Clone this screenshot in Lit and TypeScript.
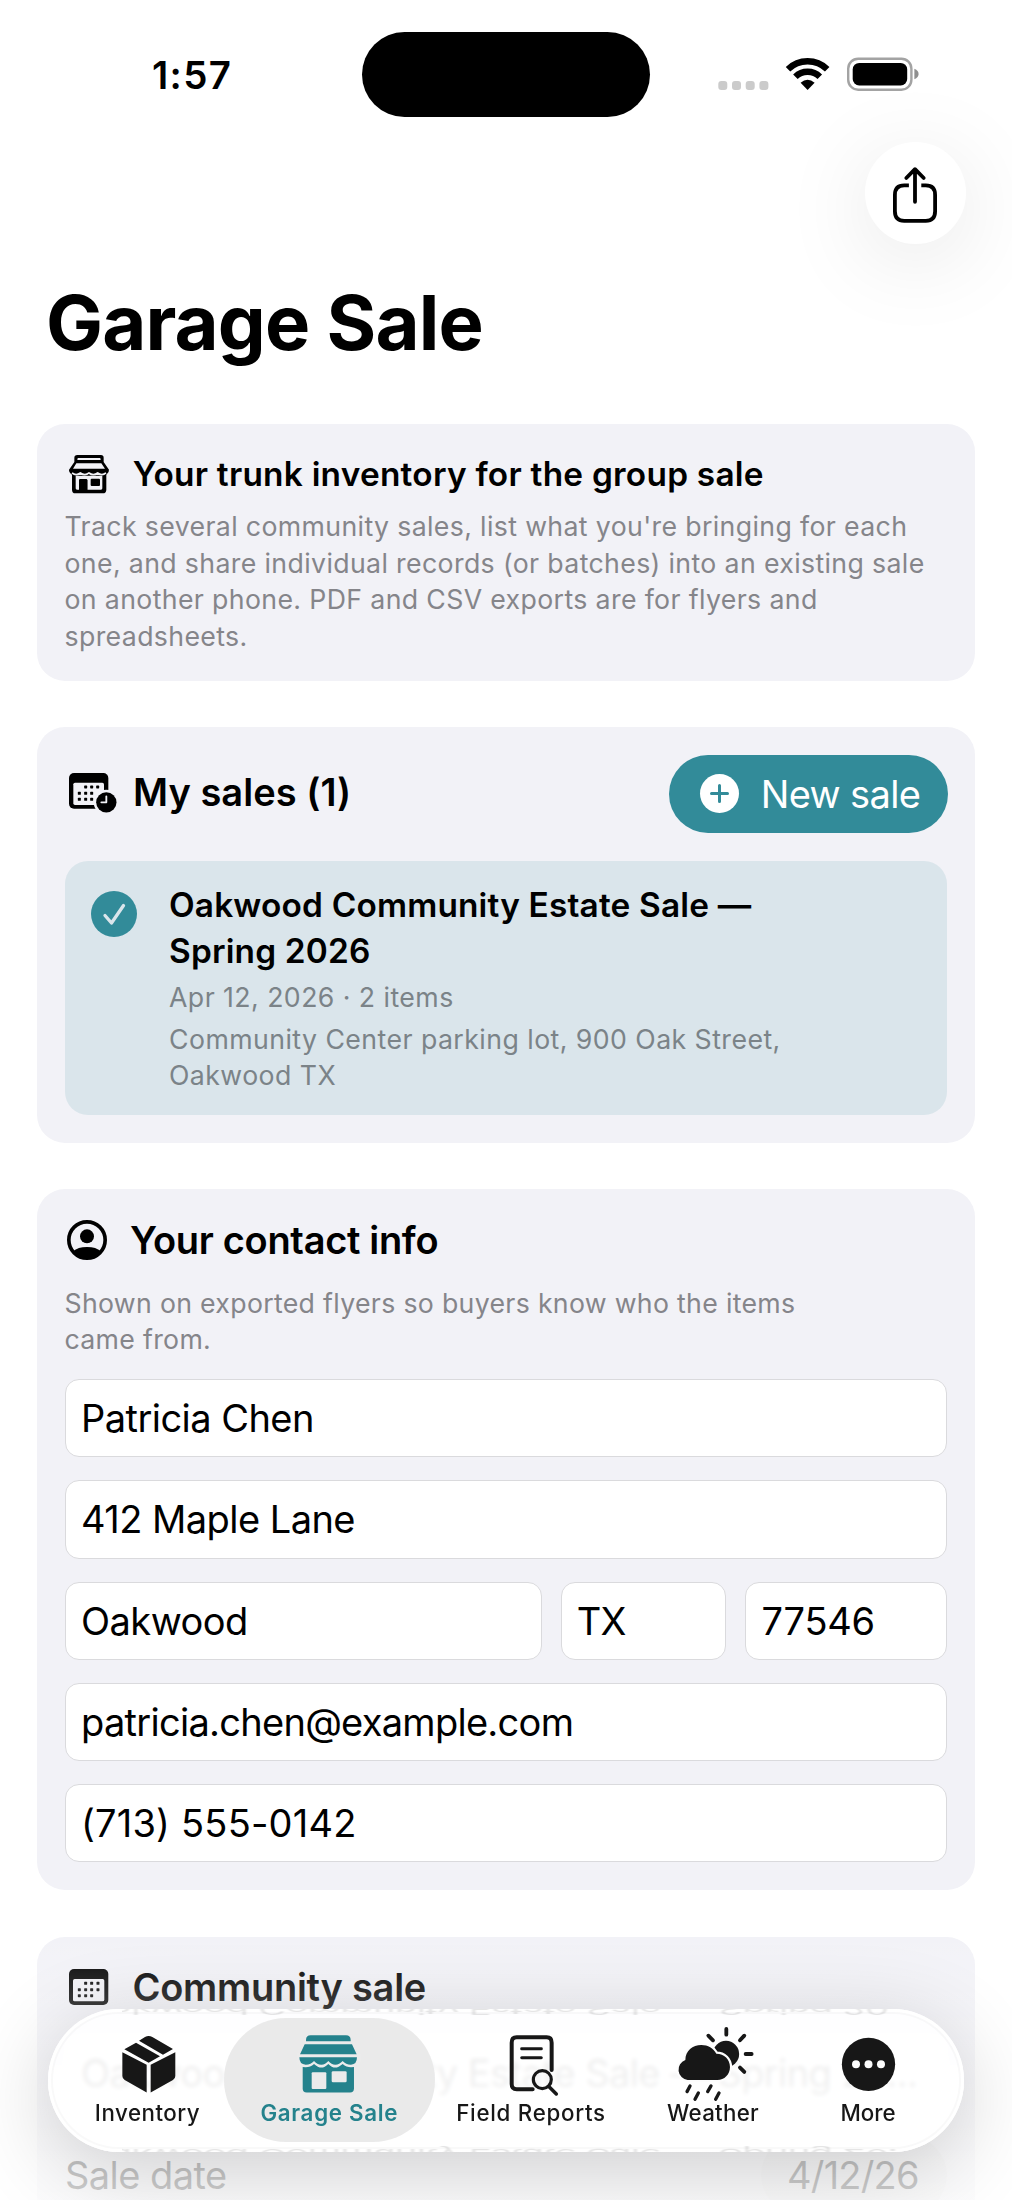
import { LitElement, html, css, svg } from "lit";

const box = svg`<path d="M366 397L439 434V518L373 480Q366 476 366 468Z M525 397L451 434V518L518 480Q525 476 525 468Z M372 388L407 368L479 409L445 428Z M416 362L434 351Q445 345 456 351L518 387L488 404Z"/>`;

const store = svg`
  <path d="M909 425H1063V506Q1063 518 1051 518H921Q909 518 909 506Z"/>
  <path class="gap" d="M890 400H1082V425Q1074 442 1054 442Q1040 442 1029 432Q1016 443 1007 443Q996 443 986 432Q975 443 965 443Q955 443 943 432Q932 442 918 442Q897 442 890 425Z"/>
  <path d="M919 364V360Q919 346 933 346H1039Q1053 346 1053 360V364Z M915 373H1057L1071 403H901Z"/>
  <path d="M899 412H1072Q1072 434 1054 434Q1038 434 1029 423Q1019 434 1007 434Q995 434 986 423Q977 434 965 434Q952 434 943 423Q934 434 918 434Q899 434 899 412Z"/>
  <rect class="gap" x="936" y="457" width="44" height="50" rx="3"/>
  <rect class="gap" x="996" y="454" width="45" height="33" rx="4"/>`;

const report = svg`<g class="line" stroke-width="12">
  <path d="M137 450V368Q137 352 122 352H32Q17 352 17 368V492Q17 508 32 508H80"/>
  <path stroke-width="9" d="M47 386H106M47 413H106"/>
  <circle stroke-width="9.5" cx="109" cy="479" r="27"/>
  <path stroke-width="10.5" d="M130 501L151 522"/></g>`;

const weather = svg`
  <circle cx="660" cy="402" r="39.5"/>
  <path class="cloud" d="M545 480A31 31 0 0 1 538 420C538 392 560 375 586 375C606 375 622 385 631 401C655 401 672 418 672 441C672 464 655 480 634 480Z"/>
  <g class="line" stroke-width="11.5">
    <path d="M661 327V344M607 347L621 361M715 347L702 361M719 402H737M702 443L715 456"/>
    <path stroke-width="10" d="M552 498L543 515M577 519L567 538M615 498L605 515M639 519L629 538"/></g>`;

const more = svg`<circle cx="1087.5" cy="433" r="80"/>
  <g class="gap"><circle cx="1050" cy="433" r="12"/><circle cx="1087.5" cy="433" r="12"/><circle cx="1125" cy="433" r="12"/></g>`;

const tabs = [
  { key: "inv", label: "Inventory", icon: box, view: "323 315 240 221" },
  { key: "gs", label: "Garage Sale", icon: store, view: "868 315 240 221" },
  { key: "fr", label: "Field Reports", icon: report, view: "-45 315 240 221" },
  { key: "we", label: "Weather", icon: weather, view: "501 315 240 221" },
  { key: "mo", label: "More", icon: more, view: "966 315 240 221" },
];

const dots = (pts: number[][]) =>
  pts.map(([x, y]) => svg`<rect x=${x - 4.5} y=${y - 4.5} width="9" height="9" rx="2"/>`);

const ghost = "Oakwood Community Estate Sale — Spring 20...";

class AppRoot extends LitElement {
  static styles = css`
    :host {
      display: block; position: relative; box-sizing: border-box;
      width: 1012px; height: 2200px; overflow: hidden;
      background: #fff; color: #000; font-family: Inter, "Liberation Sans", sans-serif;
      --teal: #328b99;
    }
    * { box-sizing: border-box; }
    svg { display: block; overflow: visible; flex: none; }
    .line { fill: none; stroke: currentColor; stroke-linecap: round; stroke-linejoin: round; }

    .status { display: flex; height: 142px; align-items: flex-start; }
    .time { margin: 52px 0 0 152px; width: 209.5px; font-size: 38.5px; line-height: 46px; font-weight: 600; letter-spacing: 1.3px; }
    .island { width: 288.5px; height: 85px; border-radius: 43px; background: #000; margin-top: 32px; }
    .signals { margin: 57px 0 0 67px; }

    .bar { display: flex; justify-content: flex-end; padding-right: 46px; height: 135px; }
    .share { width: 101.5px; height: 101.5px; border-radius: 50%; background: #fff; display: flex; justify-content: center; padding-top: 25px; box-shadow: 0 16px 90px rgba(0,0,0,.1); }
    h1 { margin: 0 0 0 46px; font-size: 76px; line-height: 90px; font-weight: 700; letter-spacing: -.85px; }

    .content { display: flex; flex-direction: column; gap: 46.7px; padding: 57px 37px 0; }
    .card { background: #f2f2f7; border-radius: 28px; padding: 27.5px 28px 0; }
    .c1 { height: 256.5px; } .c2 { height: 415.5px; } .c3 { height: 700.7px; } .c4 { height: 320px; }
    .head { display: flex; align-items: center; height: 46px; }
    .head svg { margin-left: 4px; }
    h2 { margin: 0; font-size: 38px; line-height: 46px; font-weight: 600; white-space: nowrap; }
    .trunk { font-size: 33.4px; letter-spacing: .24px; margin: -2px 0 0 23.7px; }
    .my { letter-spacing: .04px; margin-left: 16px; }
    .person { margin-left: 2.3px !important; }
    .contact { letter-spacing: -.32px; margin: 0 0 0 22.7px; }
    .comm { letter-spacing: -.27px; margin: 0 0 0 24.2px; }
    .cap { margin: 0; font-size: 26.7px; line-height: 36.8px; color: #85858a; white-space: nowrap; letter-spacing: .36px; margin-left: -.5px; }
    .c1 .cap { margin-top: 10.4px; }
    .c3 .cap { margin-top: 21.8px; letter-spacing: .309px; }

    .c2 .head { height: 78.5px; justify-content: space-between; }
    .lead { display: flex; align-items: center; padding-bottom: 2px; }
    .lead h2 { margin-top: -2px; }
    .new { display: flex; align-items: center; width: 278.5px; height: 78.5px; border-radius: 40px; background: var(--teal); color: #fff; font-size: 38px; letter-spacing: -.64px; white-space: nowrap; margin-right: -.5px; }
    .new svg { margin: 0 22px 0 30.7px !important; }
    .sale { display: flex; margin-top: 28px; height: 254px; border-radius: 23px; background: #dae5eb; padding: 20.6px 26px; }
    .sale svg { margin: 9.5px 32px 0 0; color: var(--teal); }
    .name { font-size: 33.4px; line-height: 46px; font-weight: 600; letter-spacing: .17px; white-space: nowrap; }
    .sale .cap { margin: 5px 0 0 0; color: #7b8388; letter-spacing: .44px; }

    .fields { display: grid; gap: 23px; margin-top: 20.9px; }
    .field { height: 78.2px; border: 1.5px solid #dadadd; border-radius: 14px; background: #fff; padding-left: 15px; font-size: 38px; line-height: 76.8px; letter-spacing: -.54px; white-space: nowrap; }
    .mail { letter-spacing: -.72px; }
    .phone { letter-spacing: .2px; }
    .zip { letter-spacing: -.257px; padding-left: 16px; }
    .triple { display: grid; grid-template-columns: 1fr 165.6px 202.4px; gap: 18.4px; }

    .c4 .field { margin-top: 23.6px; border-color: #ececef; letter-spacing: -.608px; }
    .date { display: flex; justify-content: space-between; align-items: center; margin-top: 21.6px; height: 82px; font-size: 38px; letter-spacing: -.554px; }
    .chip { width: 186px; height: 78px; border-radius: 39px; background: #e9e9ec; display: flex; align-items: center; padding-left: 26px; letter-spacing: -.79px; }

    .fade { position: absolute; inset: 1930px 0 0 0; background: linear-gradient(rgba(255,255,255,0), rgba(255,255,255,.11) 14%, rgba(255,255,255,.23) 28%, rgba(255,255,255,.76) 85%, rgba(255,255,255,.82)); }

    .tabbar { position: absolute; left: 48px; top: 2009px; width: 915.5px; height: 142.5px; border-radius: 71.5px; z-index: 2; box-shadow: 0 18px 85px rgba(0,0,0,.19); }
    .glass { position: absolute; inset: 0; border-radius: inherit; background: rgba(255,255,255,.88); backdrop-filter: blur(2px); overflow: hidden; box-shadow: inset 0 0 0 3px #fff, inset 0 0 0 5px rgba(0,0,0,.025); }
    .echo { position: absolute; left: 34px; font-size: 38px; line-height: 46px; letter-spacing: -.608px; white-space: nowrap; color: rgba(0,0,0,.1); filter: blur(.8px); transform: scaleY(-.4); clip-path: inset(0 20px 0 40px); }
    .top { top: -23px; }
    .bottom { top: 123px; }
    .tabs { position: relative; display: grid; grid-template-columns: 153px 210.5px 193px 171px 139px; padding: 9px 26px 0 23px; }
    .tab { height: 124px; padding-top: 7px; display: flex; flex-direction: column; align-items: center; color: #171717; font-size: 22.3px; font-weight: 500; line-height: 28px; white-space: nowrap; }
    .tab svg { width: 80px; height: 73.6px; fill: currentColor; }
    .tab .line { fill: none; }
    .tab .gap { fill: #fdfdfd; }
    .cloud { stroke: #fdfdfd; stroke-width: 13; paint-order: stroke; }
    .inv { letter-spacing: .519px; }
    .gs { letter-spacing: .7px; font-weight: 600; color: #24828c; border-radius: 62px; background: rgba(232,232,232,.93); backdrop-filter: blur(9px); }
    .gs .gap { fill: #ebebeb; }
    .fr { letter-spacing: .74px; }
    .we { letter-spacing: .277px; }
  `;

  render() {
    return html`
      <div class="status">
        <div class="time">1:57</div>
        <div class="island"></div>
        <svg class="signals" width="202" height="36" viewBox="717 57 202 36">
          <g fill="#cbcbcb"><rect x="718.3" y="81" width="9" height="9" rx="3"/><rect x="732" y="81" width="9" height="9" rx="3"/><rect x="745.7" y="81" width="9" height="9" rx="3"/><rect x="759.4" y="81" width="9" height="9" rx="3"/></g>
          <g fill="none" stroke="#000" stroke-width="6.4"><path d="M788 69.2A28 28 0 0 1 827.2 69.2"/><path d="M795.4 76.8A17.4 17.4 0 0 1 819.8 76.8"/></g>
          <path d="M807.6 90L800.6 82.8Q807.6 76.8 814.6 82.8Z"/>
          <rect x="848.2" y="58.7" width="63.2" height="31" rx="10" fill="none" stroke="#a3a3a3" stroke-width="2.4"/>
          <rect x="852.7" y="62.9" width="54.5" height="22.6" rx="6.5"/>
          <path fill="#8f8f8f" d="M914.4 68.7Q918.6 70.5 918.6 73.9T914.4 79.2Z"/>
        </svg>
      </div>
      <div class="bar">
        <div class="share">
          <svg width="46" height="60" viewBox="892.3 167 46 60"><g class="line" stroke-width="3.8">
            <path stroke-linecap="butt" d="M909.2 185.4H904.5Q895.2 185.4 895.2 194.9V211.3Q895.2 220.8 904.5 220.8H926.1Q935.4 220.8 935.4 211.3V194.9Q935.4 185.4 926.1 185.4H921.6"/>
            <path d="M915.3 201.8V169.5M906.6 178L915.3 169.2L924 178"/></g></svg>
        </div>
      </div>
      <h1>Garage Sale</h1>

      <div class="content">
        <section class="card c1">
          <div class="head">
            <svg width="40" height="38.3" viewBox="117 132 120 115">
              <path fill-rule="evenodd" d="M133 153V140Q133 132 142 132H213Q221 132 221 140V153L237 176Q238 184 229 191V236Q229 247 218 247H136Q126 247 126 236V191Q116 184 117 176ZM144 141Q142 141 142 147H212Q212 141 210 141ZM139 157L129 173H225L214 157ZM137 194V232Q137 236 141 236H147V207Q147 204 150 204H169Q172 204 172 207V236H213Q217 236 217 232V194Z"/>
              <path d="M147 207H172V240H147Z"/>
              <path fill="none" stroke="#f2f2f7" stroke-width="5" d="M126 186Q138 196 151 186Q165 196 177 186Q190 196 203 186Q216 196 228 186"/>
              <rect x="182" y="203" width="28" height="22" rx="3"/>
            </svg>
            <h2 class="trunk">Your trunk inventory for the group sale</h2>
          </div>
          <p class="cap">Track several community sales, list what you're bringing for each<br>one, and share individual records (or batches) into an existing sale<br>on another phone. PDF and CSV exports are for flyers and<br>spreadsheets.</p>
        </section>

        <section class="card c2">
          <div class="head">
            <div class="lead">
              <svg width="48" height="40" viewBox="117 178 144 120">
                <rect x="117" y="178" width="118" height="107" rx="15"/>
                <rect x="130" y="207" width="92" height="67" rx="5" fill="#f2f2f7"/>
                ${dots([[167, 220], [185, 220], [203, 220], [148, 239], [167, 239], [185, 239], [148, 257], [167, 257], [185, 257]])}
                <circle cx="229" cy="266" r="38" fill="#f2f2f7"/><circle cx="229" cy="266" r="30.5"/>
                <path d="M229 248V266H214" fill="none" stroke="#f2f2f7" stroke-width="5.5" stroke-linecap="round" stroke-linejoin="round"/>
              </svg>
              <h2 class="my">My sales (1)</h2>
            </div>
            <div class="new">
              <svg width="39" height="39" viewBox="0 0 39 39"><circle cx="19.5" cy="19.5" r="19.5" fill="#fff"/><path d="M19.5 11.5V27.5M11.5 19.5H27.5" stroke="#328b99" stroke-width="3" stroke-linecap="round"/></svg>
              <span>New sale</span>
            </div>
          </div>
          <div class="sale">
            <svg width="46" height="46" viewBox="0 0 46 46"><circle cx="23" cy="23" r="23" fill="currentColor"/><path d="M14 24.5L20.5 32L32.5 14.5" fill="none" stroke="#dae5eb" stroke-width="3.3" stroke-linecap="round" stroke-linejoin="round"/></svg>
            <div>
              <div class="name">Oakwood Community Estate Sale —<br>Spring 2026</div>
              <p class="cap">Apr 12, 2026 · 2 items</p>
              <p class="cap">Community Center parking lot, 900 Oak Street,<br>Oakwood TX</p>
            </div>
          </div>
        </section>

        <section class="card c3">
          <div class="head">
            <svg class="person" width="40" height="40" viewBox="112 121 120 120">
              <circle cx="172" cy="181" r="54.5" fill="none" stroke="#000" stroke-width="11"/>
              <circle cx="172" cy="170" r="21"/><path d="M131 215Q144 202 172 202T213 215Q196 235 172 235T131 215Z"/>
            </svg>
            <h2 class="contact">Your contact info</h2>
          </div>
          <p class="cap">Shown on exported flyers so buyers know who the items<br>came from.</p>
          <div class="fields">
            <div class="field">Patricia Chen</div>
            <div class="field">412 Maple Lane</div>
            <div class="triple"><div class="field">Oakwood</div><div class="field">TX</div><div class="field zip">77546</div></div>
            <div class="field mail">patricia.chen@example.com</div>
            <div class="field phone">(713) 555-0142</div>
          </div>
        </section>

        <section class="card c4">
          <div class="head">
            <svg width="39.3" height="36" viewBox="207 150 118 108">
              <rect x="207" y="150" width="118" height="108" rx="15"/>
              <rect x="219" y="180" width="94" height="67" rx="5" fill="#f2f2f7"/>
              ${dots([[257, 193], [275, 193], [294, 193], [238, 212], [257, 212], [275, 212], [294, 212], [238, 230], [257, 230], [275, 230]])}
            </svg>
            <h2 class="comm">Community sale</h2>
          </div>
          <div class="field">${ghost}</div>
          <div class="date"><span>Sale date</span><span class="chip">4/12/26</span></div>
        </section>
      </div>

      <div class="fade"></div>
      <nav class="tabbar">
        <div class="glass">
          <div class="echo top" aria-hidden="true">${ghost}</div>
          <div class="echo bottom" aria-hidden="true">${ghost}</div>
        </div>
        <div class="tabs">
          ${tabs.map((t) => html`<div class="tab ${t.key}"><svg viewBox=${t.view}>${t.icon}</svg><span>${t.label}</span></div>`)}
        </div>
      </nav>
    `;
  }
}
customElements.define("app-root", AppRoot);
